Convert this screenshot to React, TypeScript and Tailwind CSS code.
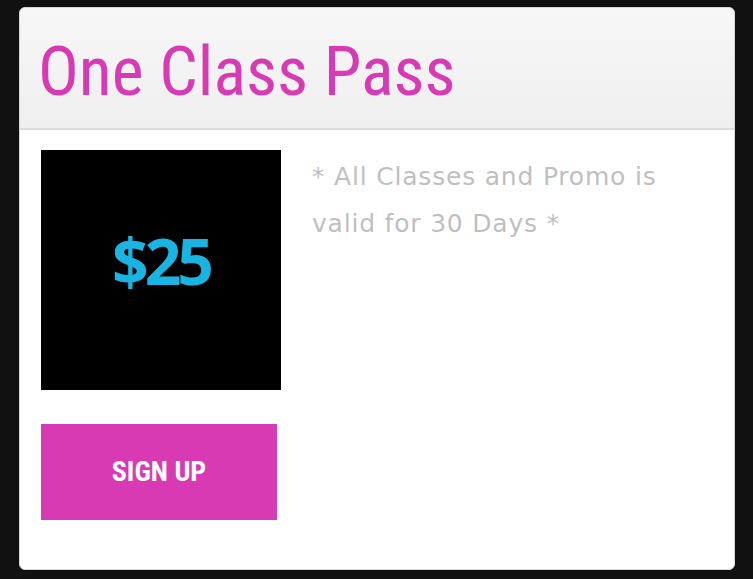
export default function App() {
  return (
    <div className="min-h-[579px] w-full bg-[#111111] pt-[7px] pl-[19px] pr-[18px]">
      <div className="h-[563px] overflow-hidden rounded-md border border-[#d6d6d6] bg-white">
        {/* Header */}
        <div className="h-[122px] border-b-2 border-[#dcdcdc] bg-gradient-to-b from-[#f7f7f7] to-[#efefef] pl-[18px] pt-[28px]">
          <h1
            className="text-[68px] leading-[72px] text-[#d83ab3]"
            style={{ fontFamily: '"Roboto Condensed", "Liberation Sans Narrow", Roboto, sans-serif' }}
          >
            One Class Pass
          </h1>
        </div>

        {/* Body */}
        <div className="flex gap-[31px] pl-[21px] pt-[20px]">
          <div className="flex flex-col gap-[34px]">
            <div className="flex h-[240px] w-[240px] items-center justify-center bg-black pb-[18px]">
              <span
                className="text-[64px] font-bold tracking-[-4px] text-[#19b4e1]"
                style={{ fontFamily: '"Open Sans", sans-serif' }}
              >
                $25
              </span>
            </div>
            <button
              className="h-[96px] w-[236px] bg-[#d83ab3] text-[28px] font-bold text-white"
              style={{ fontFamily: '"Roboto Condensed", Roboto, sans-serif' }}
            >
              SIGN UP
            </button>
          </div>
          <p
            className="w-[400px] pt-[3px] text-[25px] leading-[47px] tracking-[0.8px] text-[#bfbfbf]"
            style={{ fontFamily: '"DejaVu Sans", sans-serif' }}
          >
            * All Classes and Promo is
            <br />
            valid for 30 Days *
          </p>
        </div>
      </div>
    </div>
  );
}
